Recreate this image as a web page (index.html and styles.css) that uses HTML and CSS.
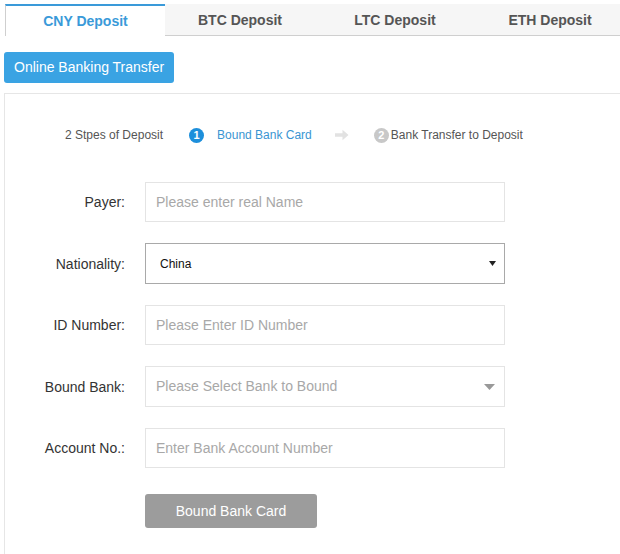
FILE: index.html
```html
<!DOCTYPE html>
<html lang="en">
<head>
<meta charset="utf-8">
<title>CNY Deposit</title>
<link rel="stylesheet" href="styles.css">
</head>
<body>
<div class="page">
  <div class="tabs">
    <div class="tab tab-active tab-wide">CNY Deposit</div>
    <div class="tab tab-narrow">BTC Deposit</div>
    <div class="tab tab-wide">LTC Deposit</div>
    <div class="tab tab-narrow">ETH Deposit</div>
  </div>

  <div class="subnav">
    <button class="btn-primary" type="button">Online Banking Transfer</button>
  </div>

  <div class="panel">
    <div class="steps">
      <span class="steps-title">2 Stpes of Deposit</span>
      <span class="step step-current">
        <span class="step-num num-blue">1</span>
        <span class="step-label">Bound Bank Card</span>
      </span>
      <svg class="step-arrow" width="14" height="12" viewBox="0 0 14 12" aria-hidden="true">
        <path d="M0 4.2h7.5V0.8L13.5 6l-6 5.2V7.8H0z" fill="#e2e2e2"/>
      </svg>
      <span class="step step-next">
        <span class="step-num num-gray">2</span>
        <span class="step-label">Bank Transfer to Deposit</span>
      </span>
    </div>

    <form class="form">
      <label class="form-label" for="payer">Payer:</label>
      <input class="field" id="payer" type="text" placeholder="Please enter real Name">

      <label class="form-label" for="nat">Nationality:</label>
      <div class="select-wrap">
        <select class="native-select" id="nat">
          <option>China</option>
        </select>
        <svg class="caret-black" width="7" height="5" viewBox="0 0 7 5" aria-hidden="true"><path d="M0 0h7L3.5 5z" fill="#222"/></svg>
      </div>

      <label class="form-label" for="idn">ID Number:</label>
      <input class="field" id="idn" type="text" placeholder="Please Enter ID Number">

      <label class="form-label">Bound Bank:</label>
      <div class="select-wrap">
        <div class="fake-select">Please Select Bank to Bound</div>
        <svg class="caret-gray" width="11" height="6" viewBox="0 0 11 6" aria-hidden="true"><path d="M0 0h11L5.5 6z" fill="#999"/></svg>
      </div>

      <label class="form-label" for="acc">Account No.:</label>
      <input class="field" id="acc" type="text" placeholder="Enter Bank Account Number">

      <span class="form-spacer"></span>
      <div class="submit-row">
        <button class="btn-gray" type="button">Bound Bank Card</button>
      </div>
    </form>
  </div>
</div>
</body>
</html>
```

FILE: styles.css
```css
html, body {
  margin: 0;
  padding: 0;
  overflow: hidden;
  background: #fff;
}

body {
  font-family: "Liberation Sans", Arial, sans-serif;
  color: #333;
  width: 620px;
  height: 554px;
}

.page {
  padding-top: 4px;
  padding-left: 4px;
}

.tabs {
  display: flex;
  margin-left: 1px;
  width: 615px;
  overflow: hidden;
}

.tab {
  flex-shrink: 0;
  box-sizing: border-box;
  height: 32px;
  line-height: 33px;
  text-align: center;
  font-size: 14px;
  font-weight: bold;
  color: #555;
  background: #f6f6f6;
  border-bottom: 1px solid #cfcfcf;
}

.tab-wide { width: 160px; }
.tab-narrow { width: 150px; }

.tab-active {
  background: #fff;
  color: #3a9ad9;
  border-top: 2px solid #3a9ad9;
  border-left: 1px solid #cfcfcf;
  border-bottom: none;
  line-height: 31px;
}

.subnav {
  padding-top: 16px;
  padding-bottom: 10px;
}

.btn-primary {
  display: block;
  height: 31px;
  padding: 0 10px;
  border: none;
  border-radius: 3px;
  background: #3aa3e3;
  color: #fff;
  font-family: inherit;
  font-size: 14px;
  line-height: 31px;
  cursor: pointer;
}

.panel {
  border-top: 1px solid #e6e6e6;
  border-left: 1px solid #e6e6e6;
  padding: 31px 0 30px 0;
}

.steps {
  display: flex;
  align-items: center;
  height: 20px;
  padding-left: 60px;
  font-size: 12px;
  color: #555;
}

.steps-title {
  margin-right: 26px;
}

.step {
  display: flex;
  align-items: center;
}

.step-num {
  display: inline-flex;
  align-items: center;
  justify-content: center;
  width: 15px;
  height: 15px;
  border-radius: 50%;
  color: #fff;
  font-size: 11px;
  font-weight: bold;
}

.num-blue { background: #1d8fdb; }
.num-gray { background: #c8c8c8; }

.step-current .step-label {
  color: #3a95d2;
  margin-left: 13px;
}

.step-arrow {
  margin-left: 23px;
  margin-right: 25px;
}

.step-next .step-label {
  margin-left: 2px;
  color: #555;
}

.form {
  display: grid;
  grid-template-columns: 120px 360px;
  column-gap: 20px;
  row-gap: 21px;
  align-items: center;
  margin-top: 37px;
}

.form-label {
  text-align: right;
  font-size: 14px;
  color: #333;
}

.field {
  box-sizing: border-box;
  width: 360px;
  height: 40px;
  padding: 0 10px;
  border: 1px solid #e4e4e4;
  font-family: inherit;
  font-size: 14px;
  color: #333;
  outline: none;
}

.field::placeholder {
  color: #a8a8a8;
}

.select-wrap {
  position: relative;
  width: 360px;
}

.native-select {
  appearance: none;
  -webkit-appearance: none;
  box-sizing: border-box;
  width: 360px;
  height: 41px;
  padding: 0 14px;
  border: 1px solid #a9a9a9;
  border-radius: 0;
  background: #fff;
  font-family: inherit;
  font-size: 12px;
  color: #111;
}

.caret-black {
  position: absolute;
  right: 9px;
  top: 18px;
}

.fake-select {
  box-sizing: border-box;
  height: 41px;
  line-height: 39px;
  padding: 0 10px;
  border: 1px solid #e4e4e4;
  font-size: 14px;
  color: #a8a8a8;
}

.caret-gray {
  position: absolute;
  right: 10px;
  top: 18px;
}

.submit-row {
  padding-top: 5px;
}

.btn-gray {
  display: block;
  width: 172px;
  height: 34px;
  border: none;
  border-radius: 3px;
  background: #9c9c9c;
  color: #fff;
  font-family: inherit;
  font-size: 14px;
  cursor: pointer;
}
```
